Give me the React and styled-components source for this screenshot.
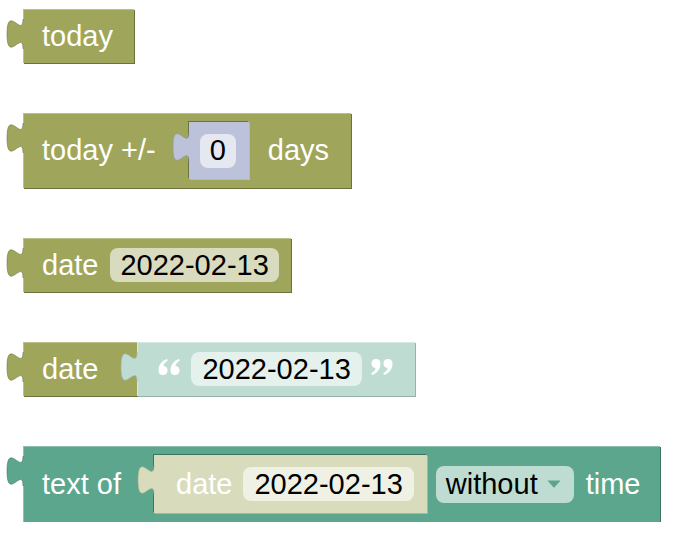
import styled, { createGlobalStyle } from 'styled-components';

const GlobalStyle = createGlobalStyle`
  html, body {
    margin: 0;
    padding: 0;
    background: #fff;
  }
  body {
    font-family: "Liberation Sans", Arial, sans-serif;
  }
`;

// blockly-ish colours (hue 65 / 160 / 230 and their shadow variants)
const palette = {
  date: { bg: '#9fa65b', dark: '#6c7140', light: '#bcc18c' },
  dateShadow: { bg: '#d9dbbd', dark: '#a9ab8c', light: '#e8e9d7' },
  math: { bg: '#bdc2db', dark: '#8e93ae', light: '#d9dcec' },
  text: { bg: '#5ba68d', dark: '#3e7361', light: '#8cc1af' },
  textShadow: { bg: '#bedcd2', dark: '#97b3a9', light: '#d7e9e3' },
};

const Workspace = styled.div`
  display: flex;
  flex-direction: column;
  align-items: flex-start;
  gap: 50px;
  padding: 9px 0 0 23px;
`;

const Row = styled.div`
  display: flex;
  align-items: flex-start;
`;

const Block = styled.div`
  position: relative;
  display: flex;
  align-items: center;
  flex: none;
  box-sizing: border-box;
  height: ${(p) => p.$h}px;
  padding: 0 ${(p) => p.$pr}px 0 ${(p) => p.$pl}px;
  margin-left: ${(p) => p.$ml || 0}px;
  background: ${(p) => p.$c.bg};
  box-shadow: ${(p) =>
    p.$socket
      ? `-1px -1px 0 ${p.$socket.dark}, 1px 1px 0 ${p.$socket.light}`
      : `1px 1px 0 ${p.$c.dark}, inset 1px 1px 0 ${p.$c.light}`};
  color: #fff;
  font-size: 29px;
  line-height: 1;
`;

const Label = styled.span`
  margin-left: ${(p) => p.$ml || 0}px;
  white-space: pre;
`;

const Field = styled.div`
  display: flex;
  align-items: center;
  box-sizing: border-box;
  height: ${(p) => p.$h || 34}px;
  padding: 0 ${(p) => p.$pr ?? p.$px ?? 10}px 0 ${(p) => p.$px ?? 10}px;
  margin-left: ${(p) => p.$ml || 0}px;
  border-radius: 8px;
  background: ${(p) => p.$bg || 'rgba(255, 255, 255, 0.6)'};
  color: #000;
  white-space: pre;
`;

const TabSvg = styled.svg`
  position: absolute;
  left: -16px;
  top: 10px;
  overflow: visible;
`;

const QuoteSvg = styled.svg`
  flex: none;
  margin-left: ${(p) => p.$ml || 0}px;
  margin-top: -5px;
`;

const Arrow = styled.svg`
  flex: none;
  margin-left: 9px;
`;

function Tab({ c }) {
  return (
    <TabSvg width="17" height="30" viewBox="0 0 17 30">
      <path
        d="M17,0 L16,0 C16,20 0,-16 0,15 C0,46 16,10 16,30 L17,30 Z"
        fill={c.bg}
      />
      <path
        d="M16,0 C16,20 0,-16 0,15 C0,46 16,10 16,30"
        fill="none"
        stroke={c.dark}
        strokeOpacity="0.55"
      />
    </TabSvg>
  );
}

const mark = 'M0.5,11.5 C0.5,6 3.5,2 9,0 L9.8,1.8 C7,3.2 5.6,5 5.5,7 A4.5,4.5 0 1 1 0.5,11.5 Z';

function Quote({ close, ml }) {
  return (
    <QuoteSvg $ml={ml} width="22" height="16" viewBox="0 0 22 16">
      <g fill="#fff" transform={close ? 'rotate(180 11 8)' : undefined}>
        <path d={mark} />
        <path d={mark} transform="translate(12 0)" />
      </g>
    </QuoteSvg>
  );
}

export default function App() {
  const { date, dateShadow, math, text, textShadow } = palette;
  return (
    <>
      <GlobalStyle />
      <Workspace>
        <Block $c={date} $h={54} $pl={19} $pr={21}>
          <Tab c={date} />
          <Label>today</Label>
        </Block>

        <Block $c={date} $h={75} $pl={19} $pr={22}>
          <Tab c={date} />
          <Label>today +/-</Label>
          <Block $c={math} $socket={date} $h={57} $ml={33} $pl={11} $pr={13}>
            <Tab c={math} />
            <Field $px={10}>0</Field>
          </Block>
          <Label $ml={19}>days</Label>
        </Block>

        <Block $c={date} $h={54} $pl={19} $pr={12}>
          <Tab c={date} />
          <Label>date</Label>
          <Field $ml={12}>2022-02-13</Field>
        </Block>

        <Row>
          <Block $c={date} $h={54} $pl={19} $pr={39}>
            <Tab c={date} />
            <Label>date</Label>
          </Block>
          <Block $c={textShadow} $h={54} $pl={21} $pr={22}>
            <Tab c={textShadow} />
            <Quote />
            <Field $ml={11} $px={11}>2022-02-13</Field>
            <Quote close ml={9} />
          </Block>
        </Row>

        <Block $c={text} $h={76} $pl={19} $pr={20}>
          <Tab c={text} />
          <Label>text of</Label>
          <Block $c={dateShadow} $socket={text} $h={58} $ml={33} $pl={22} $pr={13}>
            <Tab c={dateShadow} />
            <Label>date</Label>
            <Field $ml={11} $px={11}>2022-02-13</Field>
          </Block>
          <Field $ml={9} $h={37} $px={10} $pr={13} $bg="#bedcd2">
            without
            <Arrow width="14" height="8" viewBox="0 0 14 8">
              <path d="M1,0.5 L13,0.5 Q13.6,0.5 13.2,1 L7.6,7.2 Q7,7.8 6.4,7.2 L0.8,1 Q0.4,0.5 1,0.5 Z" fill="#5ba68d" />
            </Arrow>
          </Field>
          <Label $ml={12}>time</Label>
        </Block>
      </Workspace>
    </>
  );
}
